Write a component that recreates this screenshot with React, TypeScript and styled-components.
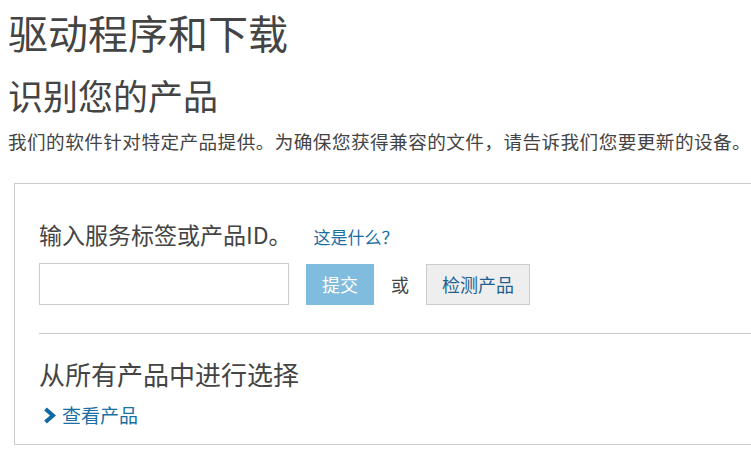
import styled, { createGlobalStyle } from "styled-components";

const GlobalStyles = createGlobalStyle`
  * {
    margin: 0;
    padding: 0;
    box-sizing: border-box;
  }

  body {
    background: #ffffff;
    overflow: hidden;
    font-family: "Noto Sans CJK SC", "Noto Sans", sans-serif;
    color: #444444;
  }
`

const Page = styled.div`
    padding: 8px 0 0 8px;
    display: flex;
    flex-direction: column;
    width: 900px;
`

const Title = styled.h1`
    font-size: 40px;
    font-weight: 400;
    line-height: 48px;
    color: #444;
`

const SubTitle = styled.h2`
    margin-top: 18px;
    font-size: 35px;
    font-weight: 400;
    line-height: 42px;
    color: #444;
`

const Intro = styled.p`
    margin-top: 12px;
    font-size: 18.6px;
    letter-spacing: 0.46px;
    line-height: 26px;
    color: #444;
    white-space: nowrap;
`

const Panel = styled.div`
    margin: 29px 0 0 6px;
    width: 880px;
    border: 1px solid #cccccc;
    padding: 35px 0 17px 24px;
    display: flex;
    flex-direction: column;
`

const LabelRow = styled.div`
    display: flex;
    align-items: baseline;
    gap: 22px;
`

const Label = styled.span`
    font-size: 23px;
    line-height: 30px;
    color: #444;
`

const HelpLink = styled.a`
    font-size: 17px;
    color: #1a6fa3;
    text-decoration: none;
    cursor: pointer;
`

const FormRow = styled.div`
    margin-top: 14px;
    display: flex;
    align-items: center;
    gap: 17px;
`

const TagInput = styled.input`
    width: 250px;
    height: 42px;
    border: 1px solid #cccccc;
    outline: none;
    padding: 0 10px;
    font-size: 18px;
    font-family: inherit;
`

const Button = styled.button<{ $primary?: boolean }>`
    height: 41px;
    padding: 0 15px;
    border: 1px solid ${p => (p.$primary ? "#7fbcdd" : "#cccccc")};
    background: ${p => (p.$primary ? "#7fbcdd" : "#eeeeee")};
    color: ${p => (p.$primary ? "#ffffff" : "#1e5f8f")};
    font-size: 18px;
    font-family: inherit;
    cursor: pointer;
`

const Or = styled.span`
    font-size: 18px;
    color: #444;
`

const Divider = styled.hr`
    margin-top: 28px;
    border: none;
    border-top: 1px solid #cccccc;
`

const SectionTitle = styled.h3`
    margin-top: 23px;
    font-size: 26px;
    font-weight: 400;
    line-height: 34px;
    color: #444;
`

const ViewLink = styled.a`
    margin-top: 12px;
    display: flex;
    align-items: center;
    gap: 6px;
    padding-left: 4px;
    font-size: 19px;
    line-height: 24px;
    color: #1a6fa3;
    text-decoration: none;
    cursor: pointer;
`

function Chevron() {
    return (
        <svg width="13" height="17" viewBox="0 0 13 17">
            <polyline points="2.5,2 10,8.5 2.5,15" fill="none" stroke="#0e6aa6" strokeWidth="4" strokeLinejoin="miter" />
        </svg>
    )
}

function App() {
    return (
        <>
            <GlobalStyles />
            <Page>
                <Title>驱动程序和下载</Title>
                <SubTitle>识别您的产品</SubTitle>
                <Intro>我们的软件针对特定产品提供。为确保您获得兼容的文件，请告诉我们您要更新的设备。</Intro>

                <Panel>
                    <LabelRow>
                        <Label>输入服务标签或产品ID。</Label>
                        <HelpLink>这是什么？</HelpLink>
                    </LabelRow>

                    <FormRow>
                        <TagInput type="text" />
                        <Button $primary>提交</Button>
                        <Or>或</Or>
                        <Button>检测产品</Button>
                    </FormRow>

                    <Divider />

                    <SectionTitle>从所有产品中进行选择</SectionTitle>
                    <ViewLink>
                        <Chevron />
                        查看产品
                    </ViewLink>
                </Panel>
            </Page>
        </>
    )
}

export default App;
